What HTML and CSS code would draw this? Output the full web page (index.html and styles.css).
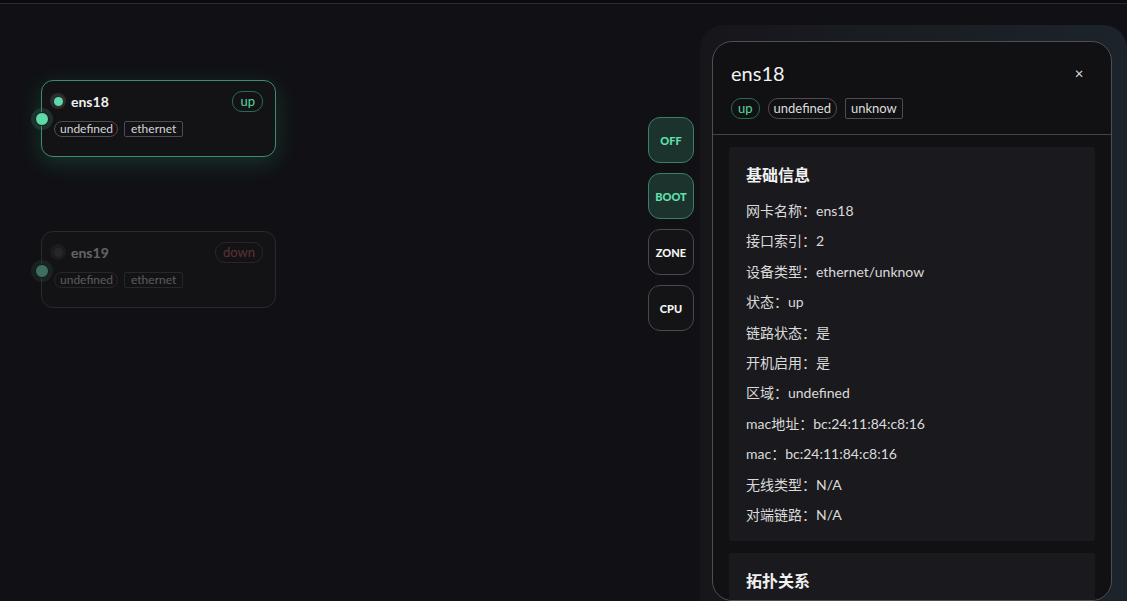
FILE: index.html
```html
<!DOCTYPE html>
<html lang="zh">
<head>
    <meta charset="UTF-8">
    <meta name="viewport" content="width=device-width, initial-scale=1.0">
    <title>网卡拓扑</title>
    <link rel="stylesheet" href="styles.css">
</head>
<body>
    <div id="topbar"></div>
    <div id="main">
        <div id="canvas">
            <div class="node active" style="left:41px; top:76px;">
                <span class="handle"></span>
                <div class="node-head">
                    <span class="dot-wrap"><span class="dot"></span></span>
                    <span class="node-name">ens18</span>
                    <span class="state up">up</span>
                </div>
                <div class="node-tags">
                    <span class="tag pill">undefined</span>
                    <span class="tag box">ethernet</span>
                </div>
            </div>
            <div class="node idle" style="left:41px; top:227px;">
                <span class="handle"></span>
                <div class="node-body">
                    <div class="node-head">
                        <span class="dot-wrap"><span class="dot"></span></span>
                        <span class="node-name">ens19</span>
                        <span class="state down">down</span>
                    </div>
                    <div class="node-tags">
                        <span class="tag pill">undefined</span>
                        <span class="tag box">ethernet</span>
                    </div>
                </div>
            </div>
        </div>
        <div id="toolbar">
            <button class="tool on">OFF</button>
            <button class="tool on">BOOT</button>
            <button class="tool">ZONE</button>
            <button class="tool">CPU</button>
        </div>
        <div id="aside">
            <div id="panel">
                <div class="panel-head">
                    <div class="title-row">
                        <span class="panel-title">ens18</span>
                        <span class="close">×</span>
                    </div>
                    <div class="panel-tags">
                        <span class="ptag pill up">up</span>
                        <span class="ptag pill">undefined</span>
                        <span class="ptag box">unknow</span>
                    </div>
                </div>
                <div class="panel-body">
                    <div class="card">
                        <div class="card-title">基础信息</div>
                        <div class="row">网卡名称：ens18</div>
                        <div class="row">接口索引：2</div>
                        <div class="row">设备类型：ethernet/unknow</div>
                        <div class="row">状态：up</div>
                        <div class="row">链路状态：是</div>
                        <div class="row">开机启用：是</div>
                        <div class="row">区域：undefined</div>
                        <div class="row">mac地址：bc:24:11:84:c8:16</div>
                        <div class="row">mac：bc:24:11:84:c8:16</div>
                        <div class="row">无线类型：N/A</div>
                        <div class="row">对端链路：N/A</div>
                    </div>
                    <div class="card">
                        <div class="card-title">拓扑关系</div>
                    </div>
                </div>
            </div>
        </div>
    </div>
</body>
</html>
```

FILE: styles.css
```css
html, body{
    margin: 0;
    height: 100%;
    overflow: hidden;
}
body{
    background-color: #111115;
    color: #e6e6e6;
    font-family: Lato, "Noto Sans CJK SC", sans-serif;
    display: flex;
    flex-direction: column;
}
#topbar{
    height: 3px;
    flex-shrink: 0;
    background-color: #0c0c0f;
    border-bottom: 1px solid #2b2b31;
}
#main{
    flex: 1;
    display: flex;
    min-height: 0;
}
#canvas{
    position: relative;
    flex: 1;
}

/* nodes */
.node{
    position: absolute;
    width: 209px;
    height: 56px;
    padding: 9px 12px 10px 12px;
    border-radius: 12px;
    border: 1px solid #2f2f34;
    background-color: #131316;
}
.node.active{
    border-color: #3c8c6e;
    box-shadow: 0 6px 22px rgba(52, 190, 140, 0.2);
}
.node.idle{
    border-color: #2a2a2e;
}
.node.idle .node-body{
    opacity: 0.36;
}
.handle{
    position: absolute;
    left: -7px;
    top: 50%;
    width: 12px;
    height: 12px;
    margin-top: -7px;
    border-radius: 50%;
    background-color: #5fd8aa;
    border: 1px solid #0f1a16;
    box-shadow: 0 0 0 4px rgba(60, 120, 100, 0.28);
}
.node.idle .handle{
    background-color: #3f6d5e;
    box-shadow: 0 0 0 4px rgba(50, 80, 70, 0.25);
    margin-top: -6px;
}
.node-head{
    display: flex;
    align-items: center;
    height: 22px;
}
.dot-wrap{
    width: 16px;
    height: 16px;
    border-radius: 50%;
    background-color: #2c2c31;
    display: flex;
    align-items: center;
    justify-content: center;
    margin-right: 5px;
    margin-left: -4px;
}
.dot{
    width: 9px;
    height: 9px;
    border-radius: 50%;
    background-color: #5fd8aa;
}
.node.idle .dot{
    background-color: #4a4a50;
}
.node-name{
    font-size: 14px;
    font-weight: bold;
    color: #f0f0f0;
    flex: 1;
}
.state{
    font-size: 13px;
    height: 19px;
    line-height: 19px;
    padding: 0 7px;
    border-radius: 10px;
    border: 1px solid #2a6a55;
    color: #5bd49f;
}
.state.down{
    border-color: #6a3b3b;
    color: #d46a6a;
}
.node-tags{
    display: flex;
    gap: 6px;
    margin-top: 9px;
}
.tag{
    font-size: 12px;
    line-height: 14px;
    padding: 0 4px 0 5px;
    border: 1px solid #4c4c52;
    color: #d6d6d6;
}
.tag.pill{
    border-radius: 8px;
}
.tag.box{
    border-radius: 2px;
    padding: 0 6px;
}

/* tool buttons */
#toolbar{
    display: flex;
    flex-direction: column;
    gap: 10px;
    padding-top: 113px;
    margin-right: 6px;
}
.tool{
    width: 46px;
    height: 46px;
    border-radius: 12px;
    border: 1px solid #48484e;
    background-color: #141417;
    color: #f4f4f4;
    font-family: Lato, sans-serif;
    font-size: 11px;
    font-weight: 900;
    padding: 0;
}
.tool.on{
    background-color: #1c332d;
    border-color: #3a8068;
    color: #62e0b0;
}

/* side panel */
#aside{
    box-sizing: border-box;
    width: 427px;
    flex-shrink: 0;
    margin-top: 21px;
    padding: 16px 15px 0 12px;
    border-radius: 24px 24px 0 0;
    background: linear-gradient(90deg, rgba(28, 28, 33, 0.45), #1a1e23 50%, #1c232a);
}
#panel{
    height: 100%;
    box-sizing: border-box;
    border: 1px solid #4e4e54;
    border-radius: 20px;
    background-color: #111114;
    overflow: hidden;
}
.panel-head{
    padding: 17px 20px 15px 18px;
    border-bottom: 1px solid #44444a;
}
.title-row{
    display: flex;
    align-items: center;
    height: 28px;
}
.panel-title{
    flex: 1;
    font-size: 20px;
    color: #f2f2f2;
}
.close{
    width: 24px;
    text-align: center;
    font-size: 15px;
    color: #dddddd;
}
.panel-tags{
    display: flex;
    gap: 8px;
    margin-top: 11px;
}
.ptag{
    font-size: 13px;
    line-height: 19px;
    padding: 0 5px;
    border: 1px solid #4c4c52;
    color: #dcdcdc;
}
.ptag.pill{
    border-radius: 10px;
}
.ptag.up{
    border-color: #2a6a55;
    color: #5bd49f;
    padding: 0 6px;
}
.ptag.box{
    border-radius: 2px;
}
.panel-body{
    padding: 12px 16px 0 16px;
    display: flex;
    flex-direction: column;
    gap: 12px;
}
.card{
    background-color: #1a1a1e;
    border-radius: 3px;
    padding: 16px 17px 11px 17px;
}
.card-title{
    font-size: 16px;
    font-weight: bold;
    line-height: 24px;
    color: #f0f0f0;
    margin-bottom: 9px;
}
.row{
    font-size: 14px;
    line-height: 30.4px;
    color: #dadada;
}
```
